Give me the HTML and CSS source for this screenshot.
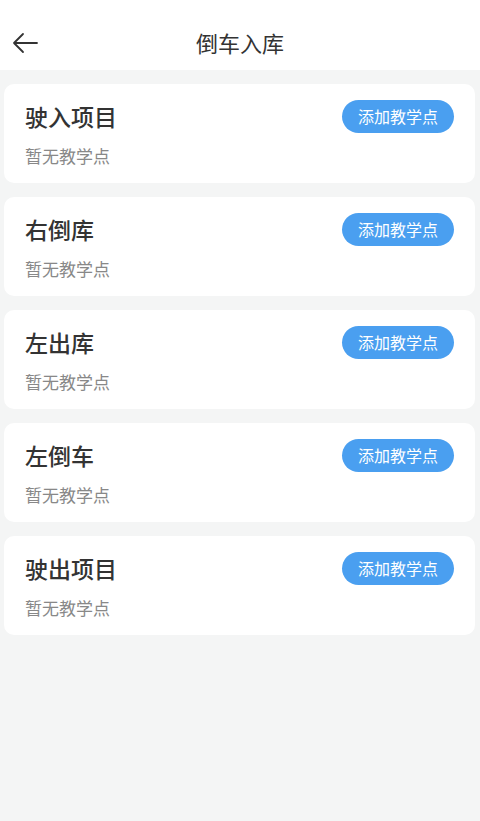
FILE: index.html
```html
<!DOCTYPE html>
<html lang="zh">
<head>
<meta charset="utf-8">
<link rel="stylesheet" href="styles.css">
</head>
<body>
<header class="nav">
  <svg class="back" width="26" height="22" viewBox="0 0 26 22"><path d="M25 11H2M11 2L2 11l9 9" fill="none" stroke="#333" stroke-width="1.8" stroke-linecap="round" stroke-linejoin="round"/></svg>
  <div class="title">倒车入库</div>
</header>
<main class="list">
  <div class="card"><div class="info"><div class="name">驶入项目</div><div class="sub">暂无教学点</div></div><div class="btn">添加教学点</div></div>
  <div class="card"><div class="info"><div class="name">右倒库</div><div class="sub">暂无教学点</div></div><div class="btn">添加教学点</div></div>
  <div class="card"><div class="info"><div class="name">左出库</div><div class="sub">暂无教学点</div></div><div class="btn">添加教学点</div></div>
  <div class="card"><div class="info"><div class="name">左倒车</div><div class="sub">暂无教学点</div></div><div class="btn">添加教学点</div></div>
  <div class="card"><div class="info"><div class="name">驶出项目</div><div class="sub">暂无教学点</div></div><div class="btn">添加教学点</div></div>
</main>
</body>
</html>
```
FILE: styles.css
```css
html, body { margin: 0; padding: 0; }
body {
  background: #f4f5f5;
  font-family: "Noto Sans CJK SC", "Noto Sans", sans-serif;
  width: 480px;
  min-height: 821px;
}
.nav {
  height: 70px;
  box-sizing: border-box;
  padding-top: 14px;
  background: #fff;
  position: relative;
  display: flex;
  align-items: center;
  justify-content: center;
}
.back { position: absolute; left: 12px; top: 32px; }
.title { font-size: 22px; color: #333; line-height: 30px; }
.list {
  padding: 14px 5px 0 4px;
  display: flex;
  flex-direction: column;
  gap: 14px;
}
.card {
  background: #fff;
  border-radius: 10px;
  height: 99px;
  box-sizing: border-box;
  padding: 15px 21px 0 21px;
  display: flex;
  justify-content: space-between;
  align-items: flex-start;
}
.name { font-size: 23px; color: #333; line-height: 34px; font-weight: 500; }
.sub { font-size: 17px; color: #888; line-height: 24px; margin-top: 11px; }
.btn {
  background: #4a9ff0;
  color: #fff;
  font-size: 16px;
  height: 33px;
  line-height: 33px;
  width: 112px;
  margin-top: 1px;
  text-align: center;
  border-radius: 17px;
}
```
